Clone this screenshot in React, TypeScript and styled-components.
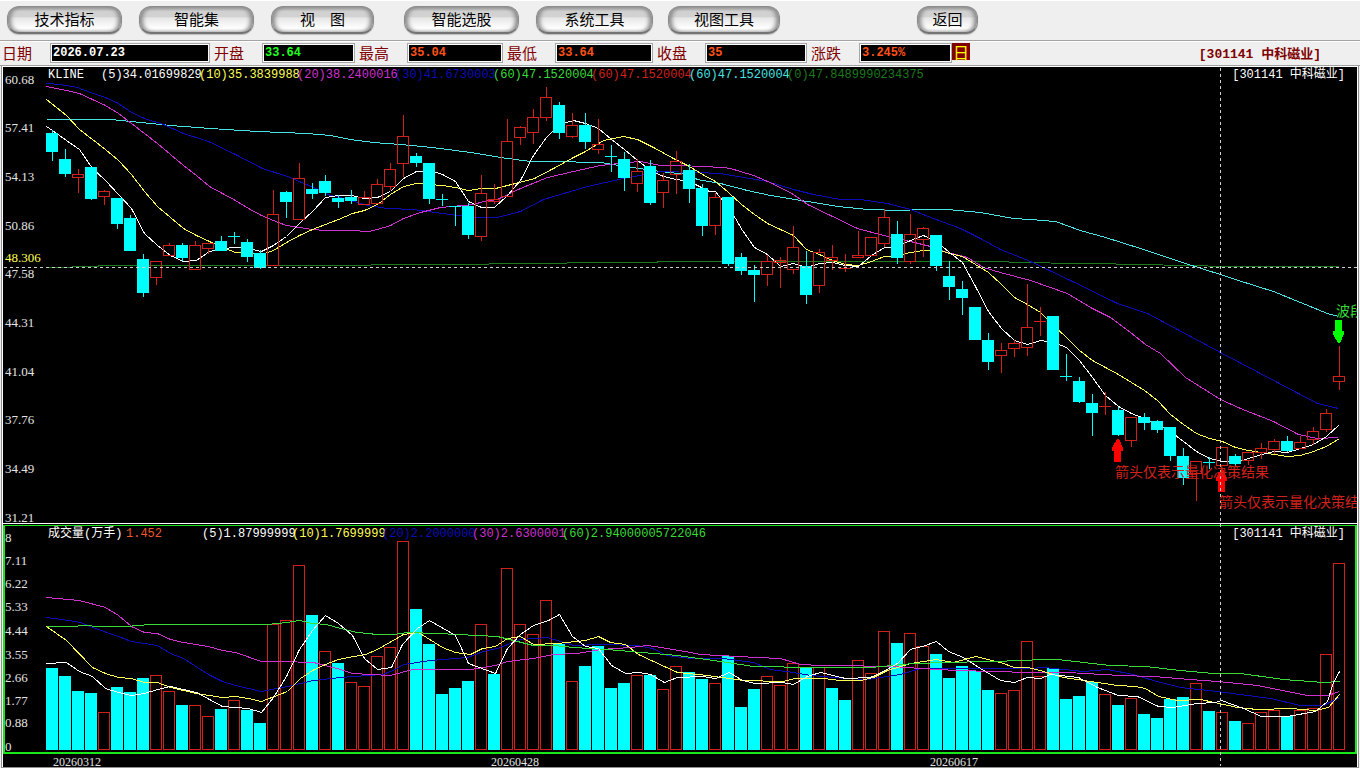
import React from "react";
import styled, { createGlobalStyle } from "styled-components";

const CJK = '"Noto Sans CJK SC", sans-serif';
const MONO = '"Liberation Mono", "Noto Sans CJK SC", monospace';
const SERIF = '"Liberation Serif", "Noto Sans CJK SC", serif';

const C = {
  red: "#d2201c",
  aqua: "#00ffff",
  white: "#ffffff",
  yellow: "#ffff54",
  magenta: "#d030d0",
  blue: "#0c0cb8",
  cyan: "#48e4e4",
  green: "#38dc38",
  darkGreen: "#1c7a1c",
  maroon: "#800000",
};

const Global = createGlobalStyle`
  * { box-sizing: border-box; }
  body { margin: 0; background: #efefef; font-family: ${CJK}; }
`;

const Page = styled.div`
  width: 100%;
  border-top: 1px solid #ffffff;
`;

const Toolbar = styled.nav`
  display: flex;
  height: 39px;
  padding: 5px 7px 0;
`;

const PillButton = styled.button<{ $w: number; $gap: number }>`
  width: ${(p) => p.$w}px;
  height: 28px;
  margin: 0 ${(p) => p.$gap}px 0 0;
  padding: 0 0 1px;
  border: 1px solid #8c8c8c;
  border-bottom: 2px solid #747474;
  border-radius: 12px;
  background: linear-gradient(#a0a0a0 0%, #d0d0d0 18%, #d2d2d2 38%, #e6e6e6 44%, #ffffff 85%, #f0f0f0 100%);
  box-shadow: inset 4px 0 4px -1px #8a8a8a, inset -4px 0 4px -1px #8a8a8a, 0 1px 1px #bcbcbc;
  color: #000;
  font: 15px/20px ${CJK};
  white-space: pre;
`;

const InfoBar = styled.section`
  display: grid;
  grid-template-columns: 212px 145px 148px 150px 154px 141px 18px 1fr;
  height: 26px;
  padding-left: 2px;
  border-top: 1px solid #a4a4a4;
  border-bottom: 1px solid #a0a0a0;
  box-shadow: inset 0 1px 0 #ffffff;
`;

const Field = styled.div<{ $end?: boolean }>`
  display: flex;
  align-items: center;
  padding-right: ${(p) => (p.$end ? 0 : 4)}px;
`;

const FieldLabel = styled.label`
  flex: 0 0 48px;
  color: ${C.maroon};
  font: 15px/20px ${CJK};
`;

const FieldInput = styled.input<{ $color: string }>`
  flex: 1;
  min-width: 0;
  height: 20px;
  padding: 0 2px;
  border: 1px solid #a8a8a8;
  outline: 1px solid #ffffff;
  outline-offset: -2px;
  border-radius: 0;
  background: #000;
  color: ${(p) => p.$color};
  font: bold 12px/18px ${MONO};
`;

const DayButton = styled.button`
  align-self: start;
  height: 17px;
  margin-top: 2px;
  padding: 0;
  border: 0;
  background: ${C.maroon};
  color: #ffff00;
  font: 16px/16px ${CJK};
`;

const StockName = styled.strong`
  justify-self: end;
  padding: 4px 39px 0 0;
  color: ${C.maroon};
  font: bold 13px/20px ${MONO};
  white-space: pre;
`;

const Workspace = styled.main`
  margin: 0 1px;
  border: 1px solid #909090;
  border-top: 0;
  background: #ffffff;
  padding: 1px 1px 0;
`;

const Board = styled.div`
  background: #000;
`;

const PricePanel = styled.section`
  overflow: hidden;
  border-bottom: 1px solid #ffffff;
`;

const VolumePanel = styled.section`
  margin-top: 1px;
  border: 2px solid #18e818;
  border-top-width: 1px;
`;

const Legend = styled.div<{ $h: number; $left: number; $right: number }>`
  display: flex;
  height: ${(p) => p.$h}px;
  padding: 0 ${(p) => p.$right}px 0 ${(p) => p.$left}px;
  font: 12px/16px ${MONO};
  white-space: pre;
`;

const LegendItem = styled.span<{ $w: number; $color: string }>`
  flex: none;
  width: ${(p) => p.$w}px;
  color: ${(p) => p.$color};
`;

const LegendStock = styled.span`
  margin-left: auto;
  color: #fff;
`;

const Chart = styled.svg`
  display: block;
  width: 100%;
  height: auto;
  overflow: visible;
`;

const AxisText = styled.text`
  font: 13px ${SERIF};
  fill: #e4e4e4;
`;

const CursorText = styled(AxisText)`
  fill: ${C.yellow};
`;

const NoteText = styled.text`
  font: 14px ${CJK};
`;

const Dates = styled.footer`
  display: grid;
  grid-template-columns: 438px 439px 1fr;
  height: 13px;
  padding-left: 50px;
  color: #e4e4e4;
  font: 12px/16px ${SERIF};
`;

type Kind = "u" | "d";
/* kind, high, body top, body bottom, low, volume top */
type Bar = [Kind, number, number, number, number, number];

const bars: Bar[] = [
  ["d", 130, 133, 152, 161, 668], ["d", 149, 159, 174, 177, 676], ["u", 169, 174, 177, 193, 691],
  ["d", 167, 167, 199, 200, 693], ["u", 190, 191, 196, 205, 712], ["d", 198, 198, 224, 229, 687],
  ["d", 215, 218, 251, 251, 692], ["d", 254, 259, 293, 297, 678], ["u", 261, 261, 277, 285, 675],
  ["u", 243, 245, 255, 255, 691], ["d", 243, 245, 258, 261, 705], ["u", 241, 245, 269, 270, 705],
  ["u", 243, 243, 248, 254, 716], ["d", 236, 241, 251, 251, 709], ["d", 232, 236, 236, 244, 700],
  ["d", 239, 242, 257, 262, 710], ["d", 250, 253, 268, 269, 723], ["u", 190, 214, 265, 265, 624],
  ["d", 191, 192, 202, 218, 620], ["u", 163, 178, 219, 219, 565], ["d", 183, 189, 194, 199, 615],
  ["d", 175, 181, 193, 196, 651], ["d", 195, 198, 202, 208, 663], ["d", 190, 197, 201, 204, 682],
  ["u", 191, 197, 204, 205, 686], ["u", 179, 184, 203, 203, 656], ["u", 163, 169, 186, 190, 647],
  ["u", 115, 136, 163, 177, 541], ["d", 153, 156, 163, 167, 609], ["d", 163, 163, 199, 204, 644],
  ["d", 194, 199, 199, 206, 694], ["d", 206, 206, 206, 226, 688], ["d", 203, 206, 235, 239, 681],
  ["u", 175, 193, 236, 241, 624], ["u", 184, 199, 201, 204, 674], ["u", 119, 141, 196, 196, 568],
  ["u", 126, 127, 137, 145, 624], ["u", 109, 117, 132, 144, 634], ["u", 87, 97, 117, 121, 600],
  ["d", 102, 105, 133, 139, 644], ["u", 113, 125, 136, 138, 681], ["d", 113, 125, 142, 149, 666],
  ["u", 119, 144, 149, 154, 646], ["d", 145, 156, 156, 172, 688], ["d", 152, 159, 178, 191, 683],
  ["u", 159, 171, 183, 192, 675], ["d", 160, 166, 203, 205, 675], ["u", 173, 180, 192, 208, 689],
  ["u", 151, 161, 174, 194, 666], ["d", 164, 170, 189, 203, 672], ["d", 184, 188, 226, 236, 679],
  ["u", 193, 197, 225, 235, 683], ["d", 197, 197, 264, 266, 656], ["d", 253, 257, 271, 275, 707],
  ["d", 265, 270, 275, 302, 689], ["u", 255, 261, 274, 286, 676], ["u", 257, 260, 262, 288, 685],
  ["u", 226, 247, 269, 274, 663], ["d", 251, 266, 295, 304, 668], ["u", 249, 252, 285, 293, 667],
  ["u", 245, 257, 260, 270, 688], ["u", 254, 268, 268, 272, 700], ["u", 231, 255, 257, 257, 660],
  ["u", 237, 237, 255, 255, 673], ["u", 209, 217, 243, 247, 631], ["d", 221, 234, 258, 264, 643],
  ["u", 214, 234, 261, 264, 633], ["u", 227, 228, 239, 257, 646], ["d", 235, 235, 266, 271, 654],
  ["d", 261, 276, 287, 300, 678], ["d", 281, 289, 298, 315, 666], ["d", 307, 307, 340, 340, 671],
  ["d", 333, 340, 362, 370, 690], ["u", 343, 350, 355, 373, 693], ["u", 340, 343, 348, 357, 690],
  ["u", 284, 327, 347, 356, 641], ["u", 307, 321, 321, 336, 676], ["d", 316, 316, 370, 370, 668],
  ["d", 354, 376, 376, 381, 699], ["d", 377, 381, 402, 403, 696], ["d", 394, 403, 413, 436, 682],
  ["u", 392, 406, 406, 415, 694], ["d", 407, 410, 435, 436, 705], ["u", 417, 417, 440, 447, 698],
  ["d", 413, 417, 423, 430, 714], ["d", 420, 421, 430, 433, 718], ["d", 427, 427, 456, 461, 699],
  ["d", 448, 456, 478, 485, 697], ["u", 461, 461, 473, 501, 683], ["d", 457, 462, 462, 469, 711],
  ["u", 447, 447, 465, 465, 712], ["d", 454, 456, 464, 466, 721], ["u", 452, 452, 460, 465, 723],
  ["u", 443, 448, 452, 459, 712], ["u", 439, 441, 449, 454, 710], ["d", 436, 441, 451, 452, 716],
  ["u", 436, 442, 448, 448, 710], ["u", 427, 431, 439, 445, 708], ["u", 409, 413, 429, 432, 654],
  ["u", 346, 376, 381, 390, 563],
];

/* sessions whose volume column is coloured opposite to its candle */
const flipped = new Set([2, 14, 18, 21, 23, 34, 42, 60, 61]);

const priceLines: [string, string][] = [
  [C.darkGreen, "46,267 98,266 98,265 370,265 371,264 488,264 489,263 566,263 567,262 657,262 657,261 1008,261 1009,262 1090,263 1140,264 1230,266 1338,266"],
  [C.cyan, "46,119 110,119 140,122 170,125 210,128 257,131 307,133 330,135 350,139 373,142 400,144 432,147 470,152 500,157 530,161 550,161 600,162 625,166 660,171 687,174 697,179 720,183 747,190 770,195 807,201 837,206 867,209 900,210 920,209 947,209 980,212 1013,218 1030,219 1055,221 1080,230 1105,237 1140,248 1185,263 1220,274 1238,280 1273,291 1300,302 1327,313 1338,316"],
  [C.blue, "46,83 60,84 77,87 90,92 105,97 118,103 131,112 144,118 163,124 183,133 208,141 235,154 262,168 287,176 313,187 330,195 340,197 367,205 387,208 413,209 450,214 473,217 497,217 520,211 543,199 560,194 587,186 623,178 660,171 697,172 720,173 767,181 793,189 813,194 840,199 860,199 887,203 910,209 933,218 960,228 980,238 1000,249 1030,261 1070,280 1117,303 1147,313 1220,352 1277,382 1317,403 1338,408"],
  [C.magenta, "46,86 66,90 79,93 92,99 105,105 118,113 131,123 144,133 157,143 170,154 183,165 196,175 209,186 222,193 235,200 248,208 261,215 273,220 286,225 312,229 325,230 351,230 368,231 377,229 390,225 403,218 420,212 440,207 473,204 483,201 497,199 520,188 547,177 573,171 600,165 627,162 640,161 660,165 680,165 723,167 730,168 753,175 772,183 793,194 807,204 830,215 857,228 883,235 910,241 930,246 947,252 967,257 983,267 1000,272 1030,280 1067,293 1090,307 1110,317 1130,332 1145,344 1160,353 1185,377 1220,399 1240,408 1273,421 1298,434 1317,438 1338,437"],
  [C.yellow, "46,99 66,115 79,129 105,149 118,160 131,174 144,191 157,206 170,217 183,228 196,235 209,241 222,247 235,252 248,253 261,254 273,250 286,242 299,235 312,229 325,224 338,219 352,213 364,210 377,204 390,194 403,186 416,183 429,184 442,185 455,187 468,190 481,188 495,188 515,183 534,178 553,168 573,157 585,151 603,140 623,136 637,139 653,147 673,158 689,166 702,174 715,181 728,192 741,204 754,214 767,223 780,229 793,235 806,249 819,254 832,260 845,264 858,265 871,261 884,256 897,255 910,252 923,250 936,249 949,253 962,256 975,264 988,272 1001,284 1014,297 1027,304 1040,312 1053,325 1066,337 1079,350 1092,360 1105,367 1118,374 1131,382 1144,390 1157,400 1170,414 1183,424 1196,433 1209,438 1222,441 1235,447 1248,450 1261,452 1274,454 1287,456 1300,455 1313,451 1326,446 1339,438"],
  [C.white, "46,126 52,130 66,140 79,149 92,168 105,180 118,194 131,208 144,233 157,245 170,255 183,261 196,260 209,251 222,248 235,247 248,248 261,251 273,245 286,236 299,223 312,211 325,197 338,195 351,195 364,198 377,197 390,191 403,178 416,171 429,170 442,174 455,181 468,201 481,207 494,207 507,195 520,180 533,155 546,137 559,124 573,120 585,123 598,128 611,139 624,149 637,160 650,170 663,176 676,179 689,181 709,191 715,191 722,200 735,218 742,230 754,247 767,254 780,266 793,263 806,267 819,263 832,262 845,265 858,266 871,255 884,247 897,246 910,240 923,235 936,241 949,252 962,262 975,286 988,311 1001,328 1014,340 1027,344 1040,340 1053,342 1066,347 1079,360 1092,377 1105,395 1118,406 1131,413 1144,418 1157,424 1170,431 1183,441 1196,451 1209,458 1222,461 1235,462 1248,458 1261,454 1274,451 1287,452 1300,448 1313,444 1326,436 1339,424"],
];

const volumeLines: [string, string][] = [
  [C.blue, "46,617 68,620 80,622 92,627 118,636 131,641 157,645 170,653 183,658 208,674 222,681 235,685 261,691 287,686 313,680 340,677 382,674 393,670 403,664 430,660 467,657 483,651 497,648 520,639 547,637 573,645 600,644 637,645 652,648 667,655 690,658 723,658 753,662 770,669 793,672 810,675 847,678 867,679 900,674 920,668 1030,668 1043,667 1083,671 1107,669 1133,674 1153,680 1180,687 1217,691 1270,698 1300,705 1323,705 1339,697"],
  [C.magenta, "46,597 79,600 105,607 118,615 131,626 144,632 157,633 170,639 183,642 208,646 222,650 235,652 261,661 280,661 313,662 325,665 340,669 352,673 390,675 412,669 470,669 495,665 507,661 533,658 553,654 577,653 600,649 630,647 647,645 667,648 690,652 700,654 757,657 780,658 800,664 820,665 860,665 867,666 893,666 920,668 957,670 1030,672 1067,672 1120,675 1153,676 1190,679 1217,681 1257,685 1287,691 1307,695 1328,695 1339,691"],
  [C.yellow, "46,626 66,640 92,667 105,673 118,677 131,678 144,682 157,682 170,687 183,690 196,693 222,697 235,696 248,698 261,701 287,691 300,678 312,670 325,664 338,659 348,657 365,654 377,649 403,634 418,632 442,647 455,652 470,654 482,648 495,646 507,638 520,636 533,644 557,643 585,640 598,636 610,642 625,644 638,654 653,661 677,672 707,675 743,680 782,681 795,678 823,678 840,680 860,680 873,677 887,670 910,663 936,659 953,662 975,656 1000,662 1014,667 1028,667 1043,671 1063,677 1097,682 1117,685 1135,686 1145,688 1158,696 1177,700 1200,699 1237,707 1257,709 1290,708 1315,710 1328,707 1339,694"],
  [C.green, "46,626 72,626 83,625 100,626 125,626 150,624 267,624 287,622 299,620 312,623 326,624 340,628 357,632 377,634 393,634 407,632 437,633 497,636 533,645 553,645 573,647 607,649 630,651 677,655 727,662 753,666 813,667 870,667 913,663 947,662 1027,660 1037,659 1057,659 1110,665 1145,666 1180,670 1213,673 1240,673 1283,679 1323,682 1339,681"],
  [C.white, "46,663 66,662 79,671 92,676 105,688 118,692 131,695 144,693 157,689 170,686 183,689 196,692 209,699 222,706 235,707 248,708 261,712 273,697 286,676 299,649 312,630 325,615 338,623 352,635 364,658 377,669 391,667 402,644 417,628 429,620 455,635 468,663 495,673 507,648 520,634 533,625 548,620 559,614 572,636 585,646 598,648 611,665 625,673 638,672 650,674 664,682 677,677 702,676 715,678 729,672 742,680 755,683 782,682 793,684 807,676 820,672 845,678 870,677 883,671 897,663 910,649 925,645 936,641 948,651 963,657 980,668 1000,680 1014,682 1027,677 1040,678 1050,674 1078,677 1097,687 1118,695 1137,696 1158,706 1172,707 1197,703 1215,702 1221,700 1243,708 1261,716 1287,716 1315,711 1327,701 1333,682 1339,671"],
];

const priceTicks: [string, number][] = [
  ["60.68", 80], ["57.41", 128], ["54.13", 177], ["50.86", 226], ["47.58", 274],
  ["44.31", 323], ["41.04", 372], ["37.76", 420], ["34.49", 469], ["31.21", 518],
];
const volumeTicks: [string, number][] = [
  ["8", 538], ["7.11", 561], ["6.22", 584], ["5.33", 607], ["4.44", 631],
  ["3.55", 655], ["2.66", 678], ["1.77", 701], ["0.88", 723], ["0", 747],
];

const menu: [string, number, number][] = [
  ["技术指标", 115, 17], ["智能集", 115, 17], ["视\u3000图", 103, 30], ["智能选股", 115, 17],
  ["系统工具", 117, 15], ["视图工具", 112, 137], ["返回", 61, 0],
];

const fields: [string, string, string][] = [
  ["日期", "2026.07.23", "#ffffff"], ["开盘", "33.64", "#20ff20"], ["最高", "35.04", "#ff5218"],
  ["最低", "33.64", "#ff5218"], ["收盘", "35", "#ff5218"], ["涨跌", "3.245%", "#ff5218"],
];

function Lines({ data }: { data: [string, string][] }) {
  return (
    <>
      {data.map(([color, points]) => (
        <polyline key={color} points={points} fill="none" stroke={color} transform="translate(.5 .5)" />
      ))}
    </>
  );
}

function Candle({ bar, index }: { bar: Bar; index: number }) {
  const [kind, high, top, bottom, low] = bar;
  const x = 46 + index * 13;
  const color = kind === "u" ? C.red : C.aqua;
  const mid = x + 6.5;
  if (top === bottom) {
    return <path d={`M${mid} ${high}V${low}M${x} ${top + 0.5}h12`} stroke={color} />;
  }
  return (
    <g stroke={color}>
      <path d={`M${mid} ${high}V${top}M${mid} ${bottom}V${low}`} />
      {kind === "u" ? (
        <rect x={x + 0.5} y={top + 0.5} width={11} height={bottom - top} fill="none" />
      ) : (
        <rect x={x} y={top} width={12} height={bottom - top} fill={color} stroke="none" />
      )}
    </g>
  );
}

function Arrow({ x, y, color, down }: { x: number; y: number; color: string; down?: boolean }) {
  const s = down ? -1 : 1;
  return (
    <path
      d={`M${x - 1} ${y}h2l4 ${9 * s}v${3 * s}h-2v${11 * s}h-7v${-11 * s}h-2v${-3 * s}z`}
      fill={color}
    />
  );
}

function PriceChart() {
  return (
    <Chart viewBox="3 83 1354 440" shapeRendering="crispEdges" role="img" aria-label="KLINE">
      <Lines data={priceLines} />
      {bars.map((bar, i) => (
        <Candle key={i} bar={bar} index={i} />
      ))}
      <path d="M4 267.5H1357" stroke="#d0d0d0" strokeDasharray="3 3" />
      <Arrow x={1118} y={439} color="#ff0000" />
      <Arrow x={1222} y={469} color="#ff0000" />
      <Arrow x={1339} y={343} color="#00ff00" down />
      <path d="M1220.5 68V523" stroke="#d0d0d0" strokeDasharray="3 3" />
      <NoteText x={1115} y={477} fill={C.red}>箭头仅表示量化决策结果</NoteText>
      <NoteText x={1219} y={507} fill={C.red}>箭头仅表示量化决策结</NoteText>
      <NoteText x={1336} y={316} fill={C.green}>波段</NoteText>
      {priceTicks.map(([label, y]) => (
        <AxisText key={label} x={5} y={y + 4}>{label}</AxisText>
      ))}
      <CursorText x={5} y={262}>48.306</CursorText>
    </Chart>
  );
}

function VolumeChart() {
  return (
    <Chart viewBox="5 540 1350 212" shapeRendering="crispEdges" role="img" aria-label="成交量">
      {bars.map(([kind, , , , , top], i) => {
        const rising = (kind === "u") !== flipped.has(i);
        const x = 46 + i * 13;
        return rising ? (
          <rect key={i} x={x + 0.5} y={top + 0.5} width={11} height={749 - top} fill="none" stroke={C.red} />
        ) : (
          <rect key={i} x={x} y={top} width={12} height={750 - top} fill={C.aqua} />
        );
      })}
      <Lines data={volumeLines} />
      {volumeTicks.map(([label, y]) => (
        <AxisText key={label} x={5} y={y + 4}>{label}</AxisText>
      ))}
      <path d="M1220.5 524V766" stroke="#d0d0d0" strokeDasharray="3 3" />
    </Chart>
  );
}

export default function App() {
  return (
    <>
      <Global />
      <Page>
        <Toolbar>
          {menu.map(([label, w, gap]) => (
            <PillButton key={label} type="button" $w={w} $gap={gap}>{label}</PillButton>
          ))}
        </Toolbar>
        <InfoBar>
          {fields.map(([label, value, color], i) => (
            <Field key={label} $end={i === 5}>
              <FieldLabel htmlFor={`quote-${i}`}>{label}</FieldLabel>
              <FieldInput id={`quote-${i}`} readOnly value={value} $color={color} />
            </Field>
          ))}
          <DayButton type="button">日</DayButton>
          <StockName>[301141 中科磁业]</StockName>
        </InfoBar>
        <Workspace>
          <Board>
            <PricePanel>
              <Legend $h={16} $left={45} $right={12}>
                <LegendItem $w={53} $color={C.white}>KLINE</LegendItem>
                <LegendItem $w={98} $color={C.white}>(5)34.01699829</LegendItem>
                <LegendItem $w={98} $color={C.yellow}>(10)35.3839988</LegendItem>
                <LegendItem $w={98} $color={C.magenta}>(20)38.2400016</LegendItem>
                <LegendItem $w={98} $color={C.blue}>(30)41.6730003</LegendItem>
                <LegendItem $w={98} $color={C.green}>(60)47.1520004</LegendItem>
                <LegendItem $w={98} $color={C.red}>(60)47.1520004</LegendItem>
                <LegendItem $w={98} $color={C.cyan}>(60)47.1520004</LegendItem>
                <LegendItem $w={140} $color={C.darkGreen}>(0)47.8489990234375</LegendItem>
                <LegendStock>[301141 中科磁业]</LegendStock>
              </Legend>
              <PriceChart />
            </PricePanel>
            <VolumePanel>
              <Legend $h={14} $left={43} $right={10}>
                <LegendItem $w={78} $color={C.white}>成交量(万手)</LegendItem>
                <LegendItem $w={76} $color="#f05828">1.452</LegendItem>
                <LegendItem $w={90} $color={C.white}>(5)1.87999999</LegendItem>
                <LegendItem $w={90} $color={C.yellow}>(10)1.7699999</LegendItem>
                <LegendItem $w={90} $color={C.blue}>(20)2.2000000</LegendItem>
                <LegendItem $w={90} $color={C.magenta}>(30)2.6300001</LegendItem>
                <LegendItem $w={146} $color={C.green}>(60)2.94000005722046</LegendItem>
                <LegendStock>[301141 中科磁业]</LegendStock>
              </Legend>
              <VolumeChart />
            </VolumePanel>
            <Dates>
              <time>20260312</time>
              <time>20260428</time>
              <time>20260617</time>
            </Dates>
          </Board>
        </Workspace>
      </Page>
    </>
  );
}
